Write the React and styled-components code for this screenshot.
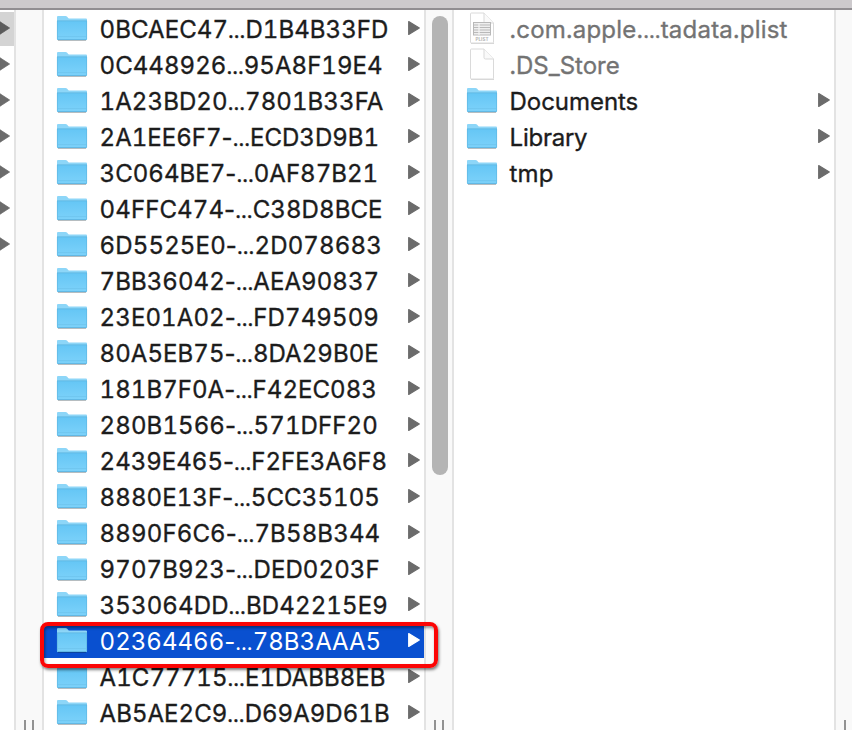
import React from 'react';
import styled, { createGlobalStyle } from 'styled-components';

const GlobalStyle = createGlobalStyle`
  * { box-sizing: border-box; }
  body { margin: 0; background: #fff; overflow: hidden; }
`;

const Window = styled.div`
  display: flex;
  flex-direction: column;
  width: 852px;
  height: 730px;
  overflow: hidden;
  background: #fff;
  font-family: Inter, 'Liberation Sans', sans-serif;
`;

const Toolbar = styled.header`
  flex: none;
  height: 10px;
  background: #cdcacd;
  border-bottom: 2px solid #918e92;
`;

const Browser = styled.main`
  display: flex;
  flex: 1;
  min-height: 0;
`;

const Column = styled.section`
  flex: none;
  width: ${(p) => p.$width}px;
  padding-top: 2px;
  overflow: hidden;
  background: #fff;
`;

const Gutter = styled.div`
  flex: none;
  display: flex;
  flex-direction: column;
  justify-content: space-between;
  align-items: center;
  width: 30px;
  padding-top: 6px;
  overflow: hidden;
  background: #f9f9f9;
  border: solid #e3e3e3;
  border-width: 0 2px;
`;

const ScrollThumb = styled.div`
  width: 16px;
  height: 459px;
  margin-left: 2px;
  border-radius: 8px;
  background: #b4b4b4;
`;

const Grip = styled.div`
  width: 10px;
  height: 10px;
  margin-top: auto;
  border: solid #929292;
  border-width: 0 2px;
`;

const Row = styled.div`
  display: flex;
  align-items: center;
  height: 34px;
  margin-bottom: 2px;
  padding: 0 4px 0 13px;
  color: ${(p) => (p.$selected ? '#fff' : p.$dim ? '#737373' : '#1c1c1c')};
  background: ${(p) => (p.$selected ? '#0950d0' : 'transparent')};
`;

const ParentRow = styled.div`
  height: 34px;
  margin-bottom: 2px;
  padding-top: 9px;
  background: ${(p) => (p.$active ? '#d4d4d4' : 'transparent')};
`;

const Name = styled.span`
  flex: 1;
  padding: 2px 0 0 10.6px;
  font-size: 24px;
  line-height: 34px;
  font-weight: 400;
  -webkit-text-stroke: ${(p) => (p.$selected ? 0 : 0.35)}px currentColor;
  font-variant-numeric: tabular-nums;
  letter-spacing: ${(p) => p.$spacing}px;
  white-space: nowrap;
`;

const Hyphen = styled.span`
  font-variant-numeric: normal;
`;

const Ellipsis = styled.span`
  font-size: 19px;
  line-height: 1;
  font-weight: 500;
`;

const Svg = styled.svg`
  display: block;
  flex: none;
  overflow: visible;
`;

const RowSvg = styled(Svg)`
  margin-bottom: 2px;
`;

const Highlight = styled.div`
  position: absolute;
  left: 40px;
  top: 622px;
  width: 398px;
  height: 46px;
  border: 4px solid #fb0505;
  border-radius: 8px;
  box-shadow: 1px 2px 3px rgba(0, 0, 0, 0.5), inset 1px 2px 3px rgba(0, 0, 0, 0.4);
`;

const FolderIcon = () => (
  <RowSvg width="32" height="28" viewBox="0 0 32 28">
    <defs>
      <linearGradient id="folder" x1="0" y1="0" x2="0" y2="1">
        <stop offset="0" stopColor="#65c6f5" />
        <stop offset="1" stopColor="#7dd2fa" />
      </linearGradient>
    </defs>
    <path d="M1 26.5H29" stroke="#000" strokeOpacity=".25" strokeWidth="1" />
    <path d="M0 25V3q0-1 1-1h7.5q1 0 1.7.8l1 1.2q.6.6 1.5.6H29q1 0 1 1V25q0 1-1 1H1q-1 0-1-1Z" fill="#8dd6f8" />
    <path d="M0 7h30v18q0 1-1 1H1q-1 0-1-1Z" fill="url(#folder)" />
    <path d="M0 6.8H30" stroke="#5db5e0" strokeWidth=".8" />
    <path d="M.4 7V25M29.6 7V25" stroke="#60b8e3" strokeWidth=".7" />
    <path d="M.5 22.6H29.5" stroke="#69bfe9" strokeWidth=".6" />
    <path d="M.5 25.6H29.5" stroke="#58aedb" strokeWidth=".8" />
  </RowSvg>
);

const FileIcon = ({ plist }) => (
  <RowSvg width="32" height="32" viewBox="0 0 32 32">
    <path d="M4 31.3h23" stroke="#ccc" />
    <path d="M3.5 2q0-1 1-1H17l9.5 10v19q0 1-1 1h-21q-1 0-1-1Z" fill="#fff" stroke="#dadada" />
    <path d="M17 1v8.5q0 1.5 1.5 1.5h8" fill="#fafafa" stroke="#d9d9d9" />
    {plist && (
      <>
        <rect x="6.5" y="10.5" width="17" height="12.5" fill="#eee" stroke="#b8b8b8" />
        <path d="M7 13H23M7 15.5H23M7 18H23M7 20.5H23" stroke="#b9b9b9" strokeWidth="1" />
        <path d="M12 11V23" stroke="#f5f5f5" strokeWidth="1.2" />
        <text x="15" y="29" textAnchor="middle" fontFamily="Inter" fontSize="4.6" fontWeight="700" fill="#b5b5b5">PLIST</text>
      </>
    )}
  </RowSvg>
);

const Arrow = ({ color = '#6b6b6b' }) => (
  <RowSvg width="12" height="14" viewBox="0 0 12 14">
    <path d="M.7.6 11.3 7 .7 13.4Z" fill={color} stroke={color} strokeWidth="1.2" strokeLinejoin="round" />
  </RowSvg>
);

const ParentArrow = ({ active }) => (
  <Svg width="10" height="14" viewBox="0 0 10 14">
    <path d="M0 .8 9.6 7 0 13.2Z" fill={active ? '#5c5c5c' : '#6b6b6b'} stroke={active ? '#5c5c5c' : '#6b6b6b'} strokeWidth=".8" strokeLinejoin="round" />
  </Svg>
);

const containers = [
  ['0BCAEC47…D1B4B33FD', 0.06],
  ['0C448926…95A8F19E4', 0.04],
  ['1A23BD20…7801B33FA', 0.08],
  ['2A1EE6F7-…ECD3D9B1', 0.02],
  ['3C064BE7-…0AF87B21', 0.03],
  ['04FFC474-…C38D8BCE', 0.1],
  ['6D5525E0-…2D078683', 0.14],
  ['7BB36042-…AEA90837', 0.06],
  ['23E01A02-…FD749509', 0.1],
  ['80A5EB75-…8DA29B0E', 0.05],
  ['181B7F0A-…F42EC083', 0.04],
  ['280B1566-…571DFF20', 0.1],
  ['2439E465-…F2FE3A6F8', 0.0],
  ['8880E13F-…5CC35105', 0.09],
  ['8890F6C6-…7B58B344', 0.14],
  ['9707B923-…DED0203F', 0.09],
  ['353064DD…BD42215E9', 0.12],
  ['02364466-…78B3AAA5', 0.02],
  ['A1C77715…E1DABB8EB', 0.06],
  ['AB5AE2C9…D69A9D61B', 0.03],
];

const contents = [
  { name: '.com.apple.…tadata.plist', kind: 'plist', spacing: 0.22 },
  { name: '.DS_Store', kind: 'file', spacing: 0.0 },
  { name: 'Documents', kind: 'folder', spacing: -0.05 },
  { name: 'Library', kind: 'folder', spacing: -0.25 },
  { name: 'tmp', kind: 'folder', spacing: 0.1 },
];

const SELECTED = 17;

const Label = ({ name, hyphenated }) =>
  name.split(hyphenated ? /([-…])/ : /(…)/).map((part, i) => {
    if (part === '…') return <Ellipsis key={i}>…</Ellipsis>;
    if (part === '-') return <Hyphen key={i}>-</Hyphen>;
    return part;
  });

export default function App() {
  return (
    <Window>
      <GlobalStyle />
      <Toolbar />
      <Browser>
        <Column $width={14}>
          {Array.from({ length: 7 }, (_, i) => (
            <ParentRow key={i} $active={i === 0}>
              <ParentArrow active={i === 0} />
            </ParentRow>
          ))}
        </Column>
        <Gutter>
          <Grip />
        </Gutter>
        <Column $width={380}>
          {containers.map(([name, spacing], i) => (
            <Row key={name} $selected={i === SELECTED}>
              <FolderIcon />
              <Name $spacing={spacing} $selected={i === SELECTED}>
                <Label name={name} hyphenated />
              </Name>
              <Arrow color={i === SELECTED ? '#fff' : undefined} />
            </Row>
          ))}
        </Column>
        <Gutter>
          <ScrollThumb />
          <Grip />
        </Gutter>
        <Column $width={380}>
          {contents.map(({ name, kind, spacing }) => (
            <Row key={name} $dim={kind !== 'folder'}>
              {kind === 'folder' ? <FolderIcon /> : <FileIcon plist={kind === 'plist'} />}
              <Name $spacing={spacing}>
                <Label name={name} />
              </Name>
              {kind === 'folder' && <Arrow />}
            </Row>
          ))}
        </Column>
        <Gutter>
          <Grip />
        </Gutter>
      </Browser>
      <Highlight />
    </Window>
  );
}
